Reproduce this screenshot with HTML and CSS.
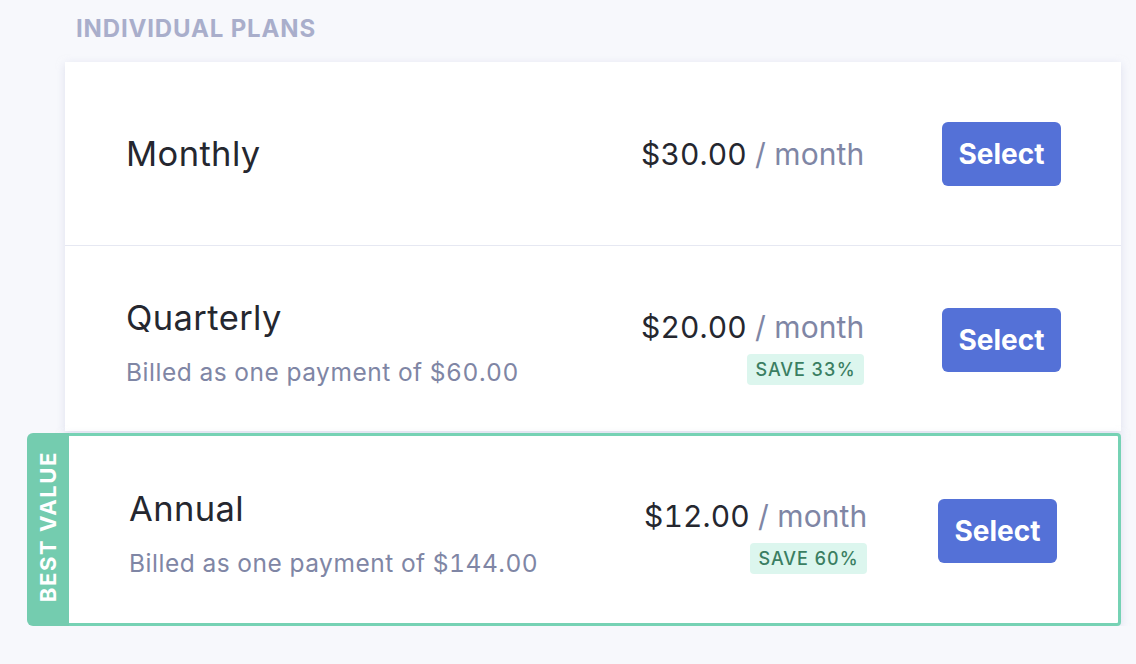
FILE: index.html
```html
<!DOCTYPE html>
<html lang="en">
<head>
<meta charset="utf-8">
<title>Individual plans</title>
<link rel="stylesheet" href="styles.css">
</head>
<body>
<main class="plans">
  <h2 class="plans-title">INDIVIDUAL PLANS</h2>
  <div class="card">
    <div class="plan plan-monthly">
      <div class="plan-info">
        <div class="plan-name">Monthly</div>
      </div>
      <div class="plan-price">
        <div class="price-line"><span class="amount">$30.00</span> <span class="per">/ month</span></div>
      </div>
      <button class="select-btn">Select</button>
    </div>
    <div class="plan plan-quarterly">
      <div class="plan-info plan-info-billed">
        <div class="plan-name">Quarterly</div>
        <div class="plan-billed">Billed as one payment of $60.00</div>
      </div>
      <div class="plan-price plan-price-save">
        <div class="price-line"><span class="amount">$20.00</span> <span class="per">/ month</span></div>
        <span class="save">SAVE 33%</span>
      </div>
      <button class="select-btn">Select</button>
    </div>
  </div>
  <div class="plan plan-annual">
    <div class="best-tab"><span class="best-text">BEST VALUE</span></div>
    <div class="plan-info plan-info-billed">
      <div class="plan-name">Annual</div>
      <div class="plan-billed">Billed as one payment of $144.00</div>
    </div>
    <div class="plan-price plan-price-save">
      <div class="price-line"><span class="amount">$12.00</span> <span class="per">/ month</span></div>
      <span class="save">SAVE 60%</span>
    </div>
    <button class="select-btn">Select</button>
  </div>
</main>
</body>
</html>
```

FILE: styles.css
```css
* { box-sizing: border-box; }

body {
  margin: 0;
  background: #f7f8fc;
  font-family: Inter, "Noto Sans", "Liberation Sans", sans-serif;
  color: #25272f;
}

.plans {
  padding: 15px 15px 0 65px;
}

.plans-title {
  margin: 0 0 19px 11px;
  font-size: 24px;
  line-height: 28px;
  font-weight: 700;
  letter-spacing: 0.85px;
  color: #a9aecb;
}

.card {
  background: #fff;
  border-radius: 4px 4px 0 0;
  box-shadow: 0 2px 8px rgba(200, 204, 228, 0.55);
}

.plan {
  display: flex;
  align-items: center;
  padding: 0 60px 0 61px;
  background: #fff;
}

.plan-monthly {
  height: 184px;
  border-bottom: 1px solid #e6e8f2;
}

.plan-quarterly {
  height: 185px;
  padding-top: 3px;
}

.plan-annual {
  position: relative;
  margin-top: 2px;
  height: 193px;
  border: 3px solid #76d2b4;
  border-radius: 0 4px 4px 0;
  padding: 3px 61px 0 61px;
  box-shadow: 0 2px 8px rgba(200, 204, 228, 0.55);
}

.plan-info {
  width: 515px;
  flex-shrink: 0;
}

.plan-info-billed {
  padding-top: 4px;
}

.plan-name {
  font-size: 34.5px;
  line-height: 40px;
  letter-spacing: 0.4px;
  color: #25272f;
}

.plan-billed {
  margin-top: 20px;
  font-size: 24.5px;
  line-height: 28px;
  letter-spacing: 0.53px;
  font-variant-numeric: tabular-nums;
  color: #7f86a5;
}

.plan-price {
  display: flex;
  flex-direction: column;
  align-items: flex-end;
  flex: 0 0 auto;
}

.plan-price-save {
  margin-top: 14px;
}

.plan-annual .plan-price-save {
  margin-top: 10px;
}

.price-line {
  font-size: 30px;
  line-height: 36px;
  letter-spacing: 0.13px;
  font-variant-numeric: tabular-nums;
  white-space: nowrap;
}

.amount { color: #25272f; }
.per { color: #7f86a5; }

.save {
  margin-top: 9px;
  display: inline-block;
  height: 31px;
  padding: 0 9px;
  line-height: 31px;
  font-size: 18px;
  font-weight: 500;
  letter-spacing: 0.9px;
  font-variant-numeric: tabular-nums;
  color: #3a7e62;
  background: #dcf6ee;
  border-radius: 4px;
}

.select-btn {
  margin-left: auto;
  width: 119px;
  height: 64px;
  border: 0;
  border-radius: 6px;
  background: #5471d7;
  color: #fff;
  font-family: Inter, "Noto Sans", "Liberation Sans", sans-serif;
  font-size: 28px;
  font-weight: 700;
  padding: 0;
}

.best-tab {
  position: absolute;
  top: -3px;
  bottom: -3px;
  left: -41px;
  width: 42px;
  background: #74ccaf;
  border-radius: 6px 0 0 6px;
  display: flex;
  align-items: center;
  justify-content: center;
}

.best-text {
  writing-mode: vertical-rl;
  transform: rotate(180deg);
  margin-top: -6px;
  color: #fff;
  font-size: 22px;
  font-weight: 700;
  letter-spacing: 1.6px;
  white-space: nowrap;
}
```
